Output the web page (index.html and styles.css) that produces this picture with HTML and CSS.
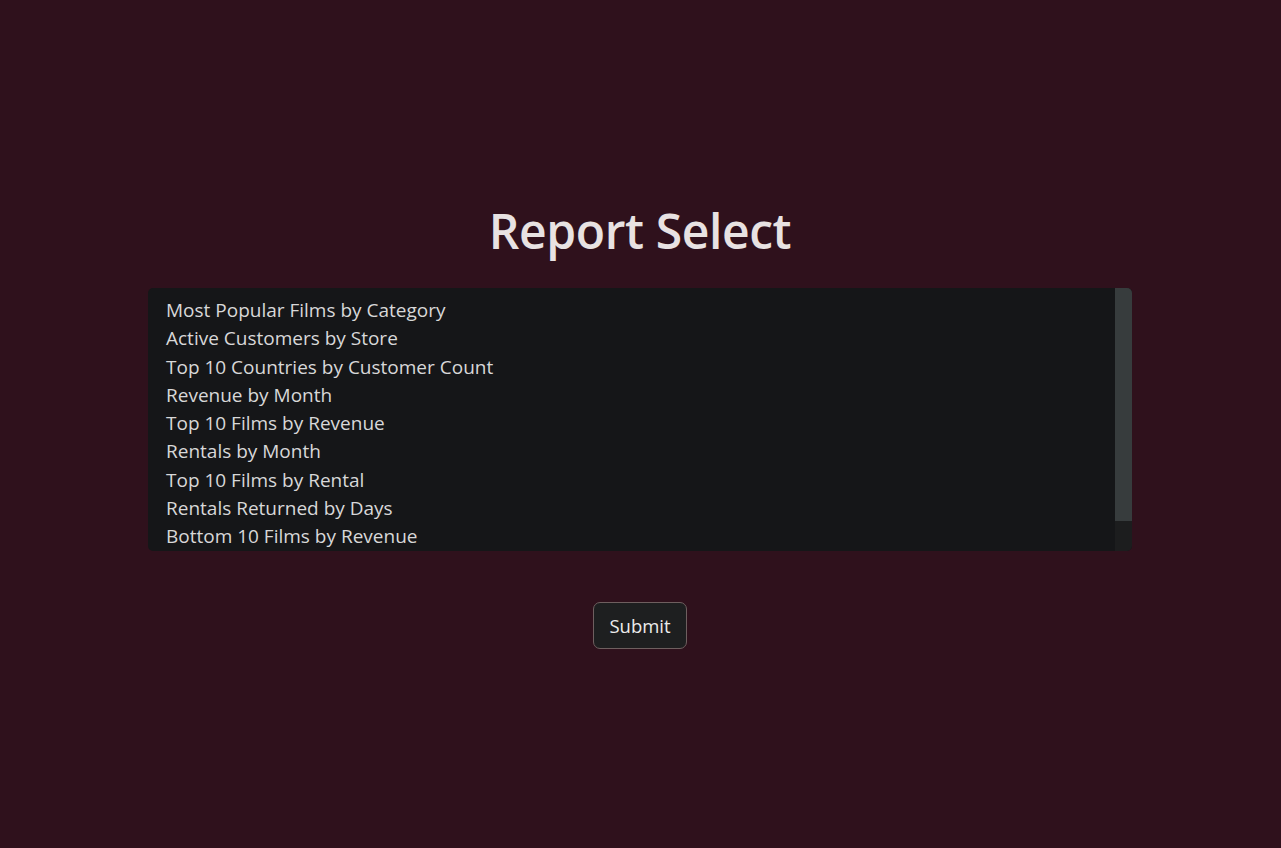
FILE: index.html
```html
<!DOCTYPE html>
<html>
<head>
<meta charset="utf-8">
<link rel="stylesheet" href="styles.css">
</head>
<body>
<main class="page">
  <h1 class="title">Report Select</h1>
  <div class="list">
    <div class="items">
      <div class="item">Most Popular Films by Category</div>
      <div class="item">Active Customers by Store</div>
      <div class="item">Top 10 Countries by Customer Count</div>
      <div class="item">Revenue by Month</div>
      <div class="item">Top 10 Films by Revenue</div>
      <div class="item">Rentals by Month</div>
      <div class="item">Top 10 Films by Rental</div>
      <div class="item">Rentals Returned by Days</div>
      <div class="item">Bottom 10 Films by Revenue</div>
    </div>
    <div class="scrollbar"><div class="thumb"></div></div>
  </div>
  <button class="submit">Submit</button>
</main>
</body>
</html>
```

FILE: styles.css
```css
html, body {
  margin: 0;
  padding: 0;
  background: #2f111c;
  height: 100%;
}
body {
  font-family: "Open Sans", "Noto Sans", sans-serif;
  color: #dcdcdc;
}
.page {
  display: flex;
  flex-direction: column;
  align-items: center;
  padding-top: 196px;
  padding-right: 1px;
}
.title {
  margin: 0;
  font-size: 48px;
  font-weight: 600;
  color: #e8e2e2;
  line-height: 70px;
  letter-spacing: -0.4px;
}
.list {
  margin-top: 22px;
  width: 984px;
  height: 263px;
  box-sizing: border-box;
  background: #151618;
  border-radius: 5px;
  overflow: hidden;
  display: flex;
}
.items {
  flex: 1;
  padding-top: 8px;
  overflow: hidden;
}
.scrollbar {
  width: 17px;
  background: #1c1d1e;
  display: flex;
  flex-direction: column;
}
.thumb {
  height: 233px;
  background: #373c3d;
}
.item {
  padding-left: 18px;
  font-size: 19px;
  line-height: 28.25px;
  height: 28.25px;
  color: #d8d8d8;
  white-space: nowrap;
}
.submit {
  margin-top: 51px;
  width: 94px;
  height: 47px;
  background: #1e1f20;
  border: 1px solid #6e5f5f;
  border-radius: 7px;
  color: #ececec;
  font-family: "Open Sans", "Noto Sans", sans-serif;
  font-size: 18.5px;
  padding: 0;
}
```
